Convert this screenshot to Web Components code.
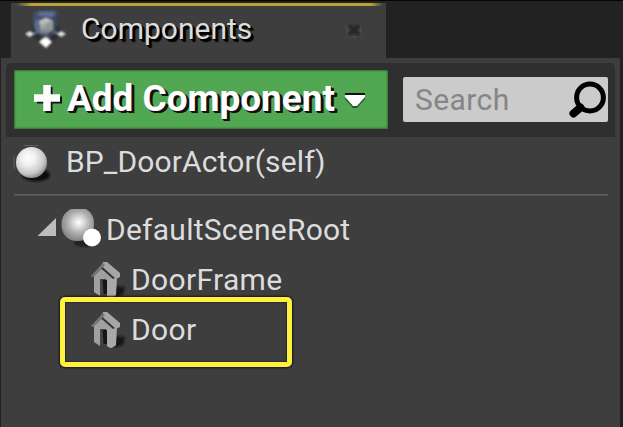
<!DOCTYPE html>
<html lang="en"><head><meta charset="utf-8"><title>Components</title>
<style>
html,body{margin:0;height:100%;background:#222;overflow:hidden}
body{font-family:Roboto,"Liberation Sans",sans-serif;font-size:30px;color:#dcdcdc;--tab-ls:0px;--add-ls:-.05px;--search-ls:.4px;--ls:.2px}
</style></head><body>
<components-panel></components-panel>
<script>
const define=(name,html)=>customElements.define(name,class extends HTMLElement{
  constructor(){super();this.attachShadow({mode:'open'}).innerHTML=html;}
});

define('icon-components',`<style>:host{display:block;width:42px;height:42px}svg{display:block}</style>
<svg width="42" height="42" viewBox="0 0 42 42"><defs><filter id="b"><feGaussianBlur stdDeviation="1"/></filter><filter id="c"><feGaussianBlur stdDeviation="1.8"/></filter>
<linearGradient id="g" x2="0" y2="1"><stop stop-color="#cfd0d0"/><stop offset="1" stop-color="#777c80"/></linearGradient></defs>
<path d="M9 15h23l5 9-15 12-16-10z" fill="#20242b" opacity=".7" filter="url(#c)"/>
<g filter="url(#b)"><path d="M8 4l5-4h19v5l-1 17-6 5-9-1-7-7z" fill="#44506a"/><path d="M12 4l4-2h13v3l-2 2-12-1zM10 11l3-2v10l6 4-2 2-7-5z" fill="#5e6f91"/><path d="M27 8l4-3-1 17-5 4-3-2 5-4z" fill="#35445f"/>
<path d="M14 11l7-3 7 3v9l-7 4-6-3z" fill="url(#g)"/><path d="M21 13l7-3v8l-7 4z" fill="#8c9092" opacity=".7"/>
<path d="M13 22l-5 2M28 22l6 2M21 25v6" stroke="#71767d" stroke-width="2"/>
<path d="M0 24l5-3 4 3-4 3zM32 24l4-3 5 3-5 3z" fill="#e4e4e4"/><path d="M14 32l4-4h5l4 4-6 6z" fill="#fff"/></g></svg>`);

define('icon-actor',`<style>:host{display:block;width:38px;height:42px}svg{display:block}</style>
<svg width="38" height="42" viewBox="0 0 38 42"><defs><filter id="b"><feGaussianBlur stdDeviation="1.3"/></filter><filter id="s"><feGaussianBlur stdDeviation=".6"/></filter><radialGradient id="g" cx=".4" cy=".36" r=".64"><stop stop-color="#fff"/><stop offset=".35" stop-color="#f0f0f0"/><stop offset=".8" stop-color="#c6c6c6"/><stop offset="1" stop-color="#929292"/></radialGradient></defs>
<ellipse cx="23" cy="34" rx="14" ry="6.5" fill="#111" filter="url(#b)"/>
<path d="M11 4.5h14M1 15v13" stroke="#777" stroke-width="1" opacity=".6"/><circle cx="18.500" cy="21.500" r="15.500" fill="url(#g)" filter="url(#s)"/></svg>`);

define('icon-scene',`<style>:host{display:block;width:42px;height:42px}svg{display:block}</style>
<svg width="42" height="42" viewBox="0 0 42 42"><defs><filter id="b"><feGaussianBlur stdDeviation="1.3"/></filter><filter id="s"><feGaussianBlur stdDeviation=".6"/></filter><radialGradient id="g" cx=".53" cy=".42" r=".57"><stop stop-color="#fff"/><stop offset=".25" stop-color="#e0e0e0"/><stop offset=".62" stop-color="#acacac"/><stop offset="1" stop-color="#858585"/></radialGradient></defs>
<ellipse cx="23" cy="34" rx="10" ry="4" fill="#202020" filter="url(#b)"/><path d="M10 0h15a16.500 16.500 0 0 1 8 15c0 11-7 17-16.500 17S.5 26 .5 15.500C.5 8 4 3 10 0z" fill="url(#g)" filter="url(#s)"/>
<circle cx="31" cy="28.500" r="9" fill="#fff" filter="url(#s)"/></svg>`);

define('icon-mesh',`<style>:host{display:block;width:38px;height:38px}svg{display:block}</style>
<svg width="38" height="38" viewBox="0 0 38 38"><defs><filter id="b"><feGaussianBlur stdDeviation="1.1"/></filter><filter id="s"><feGaussianBlur stdDeviation=".75"/></filter></defs>
<path d="M25 25l11 1-2 8-8 3z" fill="#191919" filter="url(#b)"/>
<g filter="url(#s)"><path d="M5 15l9-9 14 12-1 16-5 3-4-2-1-17H11v17l-6-4z" fill="#a0a0a0"/>
<path d="M11 18l7 1v15l-7-1z" fill="#444"/><path d="M13.500 19H18v14h-3.500z" fill="#161616"/>
<path d="M18 19l9-2v17l-5 3-4-2z" fill="#a9a9a9"/>
<path d="M14 1h4l13 11v4l-4 2L13 5z" fill="#a6a6a6"/><path d="M2 15L14 2l2 2L4 16z" fill="#777"/>
<path d="M13 7l12 10.500" stroke="#333" stroke-width="1.800"/></g></svg>`);

define('panel-tab',`<style>
:host{display:flex;box-sizing:border-box;width:375px;height:55px;background:#3e3e3e;align-items:flex-start;position:relative}
.line{position:absolute;inset:0 0 auto;height:3px;background:linear-gradient(90deg,transparent 5px,#b9a332 20px,#b9a332 calc(100% - 15px),transparent calc(100% - 3px));}
icon-components{margin:7px 0 0 14px;position:relative}
span{margin-left:14px;line-height:34px;padding-top:9px;letter-spacing:var(--tab-ls);text-shadow:1px 1px #000,2px 2px #000,3px 3px 1px #000;flex:1}
svg{margin:19px 24px 0 0}</style><div class="line"></div><icon-components></icon-components><span><slot></slot></span>
<svg width="16" height="16" viewBox="0 0 16 16"><defs><filter id="s"><feGaussianBlur stdDeviation=".8"/></filter></defs><rect x=".5" y=".5" width="15" height="15" rx="2" fill="#4a4a4a"/><path d="M3 0h10l3 3-4 5 4 5-3 3-5-3-5 3-3-3 4-5-4-5z" fill="#3e3e3e"/><path d="M3.500 3.500l9 9M12.500 3.500l-9 9" stroke="#262626" stroke-width="4" filter="url(#s)"/></svg>`);

define('add-button',`<style>
:host{display:flex;width:374px;height:59px;box-sizing:border-box;background:#52a752;box-shadow:inset 0 0 2px 1px #327132;color:#fff;font-size:37px;font-weight:700;align-items:center;padding-left:20px}
.plus{margin-top:-4px}span{margin-left:5px;line-height:59px;letter-spacing:var(--add-ls);margin-top:-3px;text-shadow:1px 1px #111,2px 2px #111,3px 2px #111;width:268px;white-space:nowrap}
svg{display:block;overflow:visible;flex:none}.arrow{margin-left:10px;margin-top:1px}</style>
<svg class="plus" width="28" height="28" viewBox="0 0 28 28"><path d="M13 1v26M1 14h25" transform="translate(2 2)" stroke="#111" stroke-width="7"/><path d="M13 1v26M0 14h26" stroke="#fff" stroke-width="7.500"/></svg>
<span><slot></slot></span><svg class="arrow" width="20" height="16" viewBox="0 0 20 16"><path d="M0 1h20v6L12 16H8L0 7z" fill="#285128"/><path d="M0 1h20v2H0z" fill="#111"/><path d="M0 3h20v2l-8 9H8L0 5z" fill="#fff"/></svg>`);

define('search-box',`<style>
:host{display:flex;width:205px;height:45px;background:#cbcbcb;border-radius:2px;box-sizing:border-box;color:#858585;align-items:center;padding:0 0 0 12px;justify-content:space-between}
span{line-height:45px;letter-spacing:var(--search-ls);margin-top:-1px}svg{display:block}</style><span><slot></slot></span>
<svg width="40" height="45" viewBox="0 0 40 45"><defs><filter id="s" x="-.3" y="-.3" width="1.6" height="1.6"><feGaussianBlur stdDeviation=".6"/></filter></defs><g filter="url(#s)"><circle cx="22" cy="20.500" r="13.400" fill="none" stroke="#050505" stroke-width="5"/><path d="M12.500 30.500l-7 6" stroke="#050505" stroke-width="8" stroke-linecap="round"/></g></svg>`);

define('tool-bar',`<style>:host{display:flex;height:74px;box-sizing:border-box;margin:5px 5px 0;background:#2f2f2f;border-radius:5px 5px 0 0;padding:7px 7px 0 8px;justify-content:space-between}
::slotted(search-box){margin-top:7px}</style><slot></slot>`);

define('tree-row',`<style>:host{display:flex;height:50px;align-items:center;box-sizing:border-box}
.label{line-height:50px;letter-spacing:var(--ls,0);white-space:nowrap}</style><slot name="icon"></slot><span class="label"><slot></slot></span>`);

define('tree-arrow',`<style>:host{display:block;width:18px;height:18px}svg{display:block}</style><svg width="18" height="18"><path d="M0 17.500L18 0V18H0z" fill="#bdbdbd"/></svg>`);

define('highlight-frame',`<style>:host{position:absolute;left:60px;top:297px;width:232px;height:70px;box-sizing:border-box;border:5px solid #fff03d;border-radius:5px;box-shadow:0 0 2px 1px #15151c,inset 0 0 1px 1px #2b2b38}</style>`);

define('components-panel',`<style>
:host{display:block;position:relative;box-sizing:border-box;width:623px;height:427px;border-top:1px solid #050505;padding:2px 3px 0 1px;background:#222}
panel-tab{margin-left:10px}.body{height:369px;background:#3e3e3e;display:flow-root}
.sep{height:2px;margin:7px 12px 9px 13px;background:linear-gradient(#606060 50%,#505050 50%)}
.self{padding-left:12px;--ls:.12px}.self icon-actor{margin-right:15px}
.root{padding-left:37px;--ls:.25px}.root tree-arrow{margin:-7px 5px 0 0}.root icon-scene{margin-right:3px}
.mesh{padding-left:88px;--ls:.35px}.mesh icon-mesh{margin-right:4px}
highlight-frame{top:296px}
</style>
<panel-tab>Components</panel-tab>
<div class="body"><tool-bar><add-button>Add Component</add-button><search-box>Search</search-box></tool-bar>
<tree-row class="self"><icon-actor slot="icon"></icon-actor>BP_DoorActor(self)</tree-row><div class="sep"></div>
<tree-row class="root"><tree-arrow slot="icon"></tree-arrow><icon-scene slot="icon"></icon-scene>DefaultSceneRoot</tree-row>
<tree-row class="mesh"><icon-mesh slot="icon"></icon-mesh>DoorFrame</tree-row>
<tree-row class="mesh"><icon-mesh slot="icon"></icon-mesh>Door</tree-row></div>
<highlight-frame></highlight-frame>`);
</script></body></html>
